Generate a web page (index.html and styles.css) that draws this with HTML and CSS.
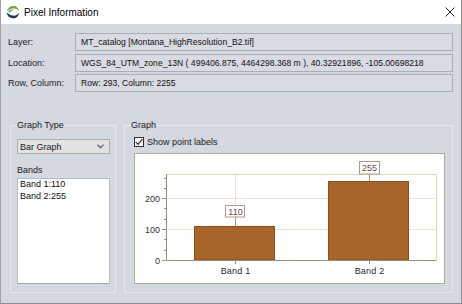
FILE: index.html
```html
<!DOCTYPE html>
<html>
<head>
<meta charset="utf-8">
<link rel="stylesheet" href="styles.css">
</head>
<body>
<div class="window">
  <div class="titlebar">
    <svg class="app-icon" viewBox="0 0 14 14" width="14" height="14">
      <path d="M1.2 6.6 C1.4 3.2 4 0.9 7.2 0.9 C10.2 0.9 12.6 3 13 5.6 C11.2 3.6 8.6 3 6.4 3.6 C4 4.3 2.4 5.4 1.2 6.6Z" fill="#6aab34"/>
      <path d="M2.4 6.4 C4 5 6 4.6 8 5 C6 5.4 4.2 6.4 3.4 8 Z" fill="#3f8fa0"/>
      <path d="M0.8 7.6 C1 11 3.8 13.3 7 13.3 C10.4 13.3 13.1 10.6 13.2 7.4 C12 9.6 9.6 10.9 7 10.6 C4.4 10.3 2.6 9.2 0.8 7.6Z" fill="#1c3a58"/>
    </svg>
    <span class="title">Pixel Information</span>
    <svg class="close" viewBox="0 0 10 10" width="10" height="10">
      <path d="M0.5 0.5 L9.5 9.5 M9.5 0.5 L0.5 9.5" stroke="#222" stroke-width="1" fill="none"/>
    </svg>
  </div>
  <div class="content">
    <div class="info-grid">
      <span class="lbl">Layer:</span>
      <div class="field">MT_catalog [Montana_HighResolution_B2.tif]</div>
      <span class="lbl">Location:</span>
      <div class="field">WGS_84_UTM_zone_13N ( 499406.875, 4464298.368 m ), 40.32921896, -105.00698218</div>
      <span class="lbl">Row, Column:</span>
      <div class="field">Row: 293, Column: 2255</div>
    </div>
    <div class="lower">
      <fieldset class="group group-type">
        <legend>Graph Type</legend>
        <div class="combo">
          <span>Bar Graph</span>
          <svg class="chevron" viewBox="0 0 7 5" width="7" height="5"><path d="M0.5 0.8 L3.5 3.8 L6.5 0.8" stroke="#6a6a6a" stroke-width="1.3" fill="none"/></svg>
        </div>
        <div class="sublabel">Bands</div>
        <div class="listbox">
          <div class="item">Band 1:110</div>
          <div class="item">Band 2:255</div>
        </div>
      </fieldset>
      <fieldset class="group group-graph">
        <legend>Graph</legend>
        <div class="check">
          <span class="box"><svg viewBox="0 0 8 8" width="8" height="8"><path d="M0.8 4 L3 6.4 L7.4 1" stroke="#222" stroke-width="1.1" fill="none"/></svg></span>
          <span>Show point labels</span>
        </div>
        <div class="chart">
          <svg width="309" height="129" viewBox="0 0 309 129">
            <g transform="translate(-135,-154)">
              <path class="plot-border" d="M166 174.5 H436.5 V260"/>
              <path class="grid" d="M167 198.5 H436 M167 229.5 H436 M235.5 175 V260 M369.5 175 V260"/>
              <rect class="bar" x="194.5" y="226.5" width="80" height="33.5"/>
              <rect class="bar" x="328.5" y="181.5" width="80" height="78.5"/>
              <path class="axis" d="M166.5 174 V260.5 H436.5"/>
              <path class="axis" d="M162 198.5 H166 M162 229.5 H166 M162 260.5 H166 M164 178.5 H166 M164 188.5 H166 M164 208.5 H166 M164 219.5 H166 M164 239.5 H166 M164 250.5 H166 M235.5 260 V264 M369.5 260 V264"/>
              <text class="ytick" x="160" y="201.5">200</text>
              <text class="ytick" x="160" y="232.5">100</text>
              <text class="ytick" x="160" y="263.5">0</text>
              <text class="xtick" x="235.5" y="273.5">Band 1</text>
              <text class="xtick" x="369.5" y="273.5">Band 2</text>
              <path class="leader" d="M235.5 217 V226 M369.5 174 V181"/>
              <rect class="pt-box" x="225.5" y="205.5" width="19" height="11.5"/>
              <rect class="pt-box" x="359.5" y="161.5" width="20" height="12.5"/>
              <text class="pt-label" x="235.5" y="214.5">110</text>
              <text class="pt-label" x="369.5" y="171">255</text>
            </g>
          </svg>
        </div>
      </fieldset>
    </div>
  </div>
</div>
</body>
</html>
```
FILE: styles.css
```css
* { box-sizing: border-box; }
html, body { margin: 0; padding: 0; }
body {
  width: 462px;
  height: 304px;
  overflow: hidden;
  font-family: "Liberation Sans", Arial, sans-serif;
  font-size: 9px;
  color: #1a1a1a;
}
.window {
  width: 462px;
  height: 304px;
  background: #d4d8e0;
  border-left: 1px solid #a0a0a0;
  border-right: 1px solid #8e8e8e;
  border-bottom: 1px solid #8e8e8e;
  display: flex;
  flex-direction: column;
}
.titlebar {
  flex: none;
  height: 24px;
  background: #fff;
  display: flex;
  align-items: center;
  padding-left: 5px;
}
.app-icon { flex: none; margin-right: 4px; }
.title { flex: 1; font-size: 10px; color: #000; }
.close { flex: none; margin-right: 6px; }
.content { padding: 9px 8px 0 7px; }
.info-grid {
  display: grid;
  grid-template-columns: 67px 1fr;
  row-gap: 2.5px;
  align-items: center;
}
.lbl { color: #222; }
.field {
  height: 18px;
  border: 1px solid #a9aeb6;
  background: #d8dbe2;
  padding-left: 5px;
  line-height: 16px;
  font-size: 8.6px;
  white-space: nowrap;
  overflow: hidden;
  color: #111;
}
.lower {
  display: flex;
  margin-top: 27px;
  margin-left: 2px;
  gap: 8px;
}
.group {
  margin: 0;
  border: 1px solid #e6e8ed;
  padding: 0 6px 8px 6px;
  min-width: 0;
}
.group legend {
  padding: 0;
  line-height: 12px;
  color: #222;
}
.group-type { width: 106px; flex: none; }
.group-graph { flex: 1; }
.combo {
  margin-top: 8px;
  width: 93px;
  height: 15px;
  border: 1px solid #adadad;
  background: #e2e2e2;
  display: flex;
  align-items: center;
  justify-content: space-between;
  padding: 0 5px 0 2px;
}
.chevron { display: block; }
.sublabel { margin-top: 10px; line-height: 12px; color: #222; }
.listbox {
  margin-top: 2px;
  width: 93px;
  height: 106px;
  background: #fff;
  border: 1px solid #b9bdc5;
  border-bottom-color: #9fa3ab;
  padding: 0 2px;
}
.item { line-height: 11.5px; color: #111; }
.check {
  margin-top: 5px;
  margin-left: 3px;
  height: 12px;
  display: flex;
  align-items: center;
  gap: 3px;
}
.box {
  width: 10px;
  height: 10px;
  border: 1px solid #333;
  background: #f4f4f4;
  display: flex;
  align-items: center;
  justify-content: center;
}
.box svg { display: block; }
.chart {
  margin-top: 5px;
  margin-left: 3px;
  width: 311px;
  height: 131px;
  border: 1px solid #a9b38f;
  background: #fff;
}
.chart svg { display: block; }
.plot-border { fill: none; stroke: #d6dabb; stroke-width: 1; }
.grid { fill: none; stroke: #e3e6d2; stroke-width: 1; }
.axis { fill: none; stroke: #8c9676; stroke-width: 1; }
.bar { fill: #a8652a; stroke: #8b4f1f; stroke-width: 1; }
.leader { fill: none; stroke: #b49684; stroke-width: 1; }
.pt-box { fill: #fff; stroke: #b8988a; stroke-width: 1; }
.chart text {
  font-family: "Liberation Sans", Arial, sans-serif;
  font-size: 9px;
}
.ytick { text-anchor: end; fill: #2f3344; font-size: 8.5px; }
.xtick { text-anchor: middle; fill: #2a2a2a; letter-spacing: 0.2px; }
.pt-label { text-anchor: middle; fill: #6e4c3e; }
```
